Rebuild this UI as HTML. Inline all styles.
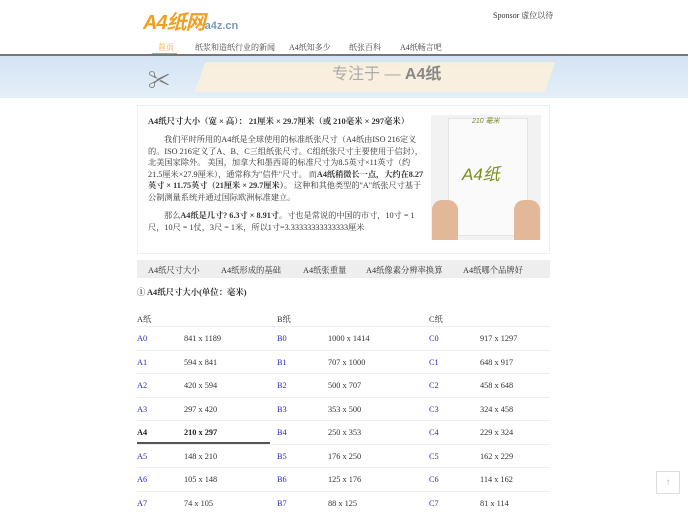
<!DOCTYPE html>
<html><head><meta charset="utf-8"><style>
*{margin:0;padding:0;box-sizing:border-box}
body{width:688px;height:512px;overflow:hidden;background:#fff;font-family:"Liberation Serif","Noto Serif CJK SC",serif;color:#333;position:relative}
.abs{position:absolute}
.nav span{position:absolute;top:42px;font-size:8px;color:#444}
.t{font-size:8.2px;line-height:11.6px;color:#333}
.row{position:absolute;left:137px;width:413px;height:23.4px;border-top:1px solid #eee;font-size:8.3px}
.row span{position:absolute;top:7px}
.l{color:#2a2ac0}
</style></head><body>
<div class="abs" style="left:143px;top:6px;font:bold italic 20px 'Liberation Sans','Noto Sans CJK SC',sans-serif;color:#f0a020;letter-spacing:-1px">A4纸网<span style="font-size:11px;color:#7a9ab8;font-style:normal;letter-spacing:0">a4z.cn</span></div>
<div class="abs" style="left:493px;top:10px;font-size:8px;color:#333">Sponsor 虚位以待</div>
<div class="nav"><span style="left:158px;color:#e89a20">首页</span><span style="left:195px">纸浆和造纸行业的新闻</span><span style="left:289px">A4纸知多少</span><span style="left:349px">纸张百科</span><span style="left:400px">A4纸畅言吧</span></div>
<div class="abs" style="left:152px;top:53px;width:25px;height:2px;background:#f0a020"></div>
<div class="abs" style="left:0;top:54px;width:688px;height:2px;background:#777"></div>
<div class="abs" style="left:0;top:56px;width:688px;height:42px;background:linear-gradient(180deg,#d4e4f4,#e4eef8)"></div>
<div class="abs" style="left:200px;top:62px;width:350px;height:30px;background:#fbf0dc;transform:skewX(-20deg);opacity:.9"></div>
<div class="abs" style="left:148px;top:64px;font-size:22px;color:#777">✂</div>
<div class="abs" style="left:332px;top:60px;font:16px 'Liberation Sans','Noto Sans CJK SC',sans-serif;color:#aaa">专注于 — <b style="color:#888">A4纸</b></div>
<div class="abs" style="left:137px;top:105px;width:413px;height:149px;border:1px solid #eee"></div>
<div class="abs t" style="left:148px;top:116px;width:280px;font-weight:bold;font-size:8.4px">A4纸尺寸大小（宽 × 高）： 21厘米 × 29.7厘米（或 210毫米 × 297毫米）</div>
<div class="abs t" style="left:148px;top:134px;width:276px;text-indent:16px">我们平时所用的A4纸是全球使用的标准纸张尺寸（A4纸由ISO 216定义的。ISO 216定义了A、B、C三组纸张尺寸。C组纸张尺寸主要使用于信封），北美国家除外。 美国，加拿大和墨西哥的标准尺寸为8.5英寸×11英寸（约21.5厘米×27.9厘米），通常称为"信件"尺寸。 而<b>A4纸稍微长一点，大约在8.27英寸 × 11.75英寸（21厘米 × 29.7厘米）</b>。 这种和其他类型的"A"纸张尺寸基于公制测量系统并通过国际欧洲标准建立。</div>
<div class="abs t" style="left:148px;top:210px;width:276px;text-indent:16px">那么<b>A4纸是几寸? 6.3寸 × 8.91寸</b>。寸也是常说的中国的市寸，10寸 = 1尺，10尺 = 1仗，3尺 = 1米，所以1寸=3.33333333333333厘米</div>
<div class="abs" style="left:431px;top:115px;width:110px;height:125px;background:#f2f2f2"></div>
<div class="abs" style="left:448px;top:118px;width:80px;height:118px;background:#fafafa;border:1px solid #e4e4e4"></div>
<div class="abs" style="left:472px;top:116px;font:italic 7px 'Liberation Sans',sans-serif;color:#7a8a20">210 毫米</div>
<div class="abs" style="left:462px;top:160px;font:italic 17px 'Liberation Sans','Noto Sans CJK SC',sans-serif;color:#7a9020">A4纸</div>
<div class="abs" style="left:432px;top:200px;width:26px;height:40px;background:#e2b898;border-radius:10px 10px 0 0"></div>
<div class="abs" style="left:514px;top:200px;width:26px;height:40px;background:#e2b898;border-radius:10px 10px 0 0"></div>
<div class="abs" style="left:137px;top:260px;width:413px;height:18px;background:#eee;font-size:8.3px"><span class="abs" style="left:11px;top:4px">A4纸尺寸大小</span><span class="abs" style="left:84px;top:4px">A4纸形成的基础</span><span class="abs" style="left:166px;top:4px">A4纸张重量</span><span class="abs" style="left:229px;top:4px">A4纸像素分辨率换算</span><span class="abs" style="left:326px;top:4px">A4纸哪个品牌好</span></div>
<div class="abs" style="left:137px;top:286px;font-size:8.4px;font-weight:bold">① A4纸尺寸大小(单位：毫米)</div>
<div class="row" style="top:306px;border:none"><span style="left:0">A纸</span><span style="left:140px">B纸</span><span style="left:292px">C纸</span></div>
<div class="row" style="top:326px"><span class="l" style="left:0">A0</span><span style="left:47px">841 x 1189</span><span class="l" style="left:140px">B0</span><span style="left:191px">1000 x 1414</span><span class="l" style="left:292px">C0</span><span style="left:343px">917 x 1297</span></div>
<div class="row" style="top:349.5px"><span class="l" style="left:0">A1</span><span style="left:47px">594 x 841</span><span class="l" style="left:140px">B1</span><span style="left:191px">707 x 1000</span><span class="l" style="left:292px">C1</span><span style="left:343px">648 x 917</span></div>
<div class="row" style="top:373px"><span class="l" style="left:0">A2</span><span style="left:47px">420 x 594</span><span class="l" style="left:140px">B2</span><span style="left:191px">500 x 707</span><span class="l" style="left:292px">C2</span><span style="left:343px">458 x 648</span></div>
<div class="row" style="top:396.5px"><span class="l" style="left:0">A3</span><span style="left:47px">297 x 420</span><span class="l" style="left:140px">B3</span><span style="left:191px">353 x 500</span><span class="l" style="left:292px">C3</span><span style="left:343px">324 x 458</span></div>
<div class="row" style="top:420px"><span style="left:0;font-weight:bold;color:#222">A4</span><span style="left:47px;font-weight:bold;color:#222">210 x 297</span><span class="l" style="left:140px">B4</span><span style="left:191px">250 x 353</span><span class="l" style="left:292px">C4</span><span style="left:343px">229 x 324</span></div>
<div class="abs" style="left:137px;top:442px;width:133px;height:2px;background:#555"></div>
<div class="row" style="top:443.5px"><span class="l" style="left:0">A5</span><span style="left:47px">148 x 210</span><span class="l" style="left:140px">B5</span><span style="left:191px">176 x 250</span><span class="l" style="left:292px">C5</span><span style="left:343px">162 x 229</span></div>
<div class="row" style="top:467px"><span class="l" style="left:0">A6</span><span style="left:47px">105 x 148</span><span class="l" style="left:140px">B6</span><span style="left:191px">125 x 176</span><span class="l" style="left:292px">C6</span><span style="left:343px">114 x 162</span></div>
<div class="row" style="top:490.5px"><span class="l" style="left:0">A7</span><span style="left:47px">74 x 105</span><span class="l" style="left:140px">B7</span><span style="left:191px">88 x 125</span><span class="l" style="left:292px">C7</span><span style="left:343px">81 x 114</span></div>
<div class="abs" style="left:656px;top:471px;width:24px;height:23px;border:1px solid #ddd;background:#fff;color:#bbb;font-size:10px;text-align:center;line-height:21px">↑</div>
</body></html>
